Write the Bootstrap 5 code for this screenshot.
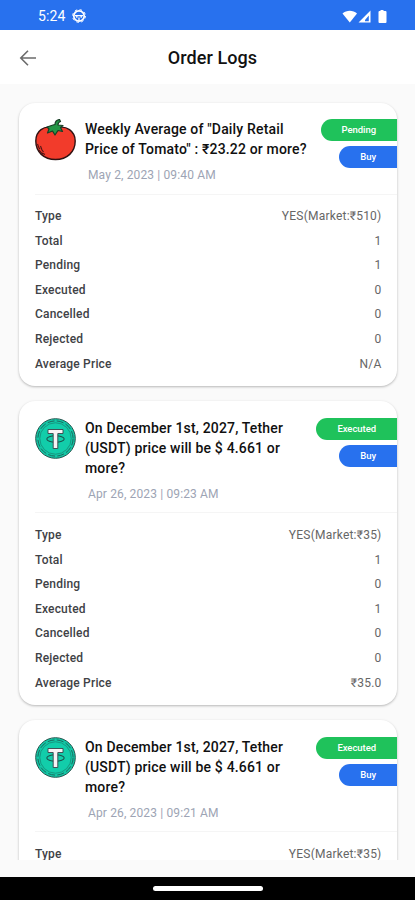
<!DOCTYPE html>
<html lang="en">
<head>
<meta charset="utf-8">
<meta name="viewport" content="width=device-width, initial-scale=1">
<title>Order Logs</title>
<link href="https://cdn.jsdelivr.net/npm/bootstrap@5.3.0/dist/css/bootstrap.min.css" rel="stylesheet">
<style>
body{font-family:Roboto,"Noto Sans",sans-serif;background:#fafafa;height:900px}
.statusbar{height:30px;background:#2871ee;padding:3px 27px 0 38px}
.clock{font-size:14px;letter-spacing:.1px}
.app-glyph{margin:-1px 0 0 7px}
.topbar{height:54px;padding:2px 19px 0}
.page-title{font-size:18px;font-weight:500;color:#111;letter-spacing:.08px;margin-right:8px;line-height:24px}
.feed{height:776px;padding:18.5px 18px 0 18.5px;gap:15px}
.order{border:0;border-radius:16px;box-shadow:0 1px 2.5px rgba(0,0,0,.27);padding:16.5px 0 10.5px 16.5px}
.order-title{font-size:14px;font-weight:500;line-height:20px;color:#101010;letter-spacing:.17px;margin:0}
.order-date{font-size:12px;line-height:16px;color:#9da4b4;margin:8px 0 0 3px;letter-spacing:.14px}
.order-icon{width:41px;height:43px}
.order-text{width:226px;margin-left:9px}
.pill{height:22px;border-radius:11px 0 0 11px;padding:0 21px;font-size:9.5px;font-weight:500;color:#fff;letter-spacing:-.05px}
.pill-status{background:#1fc25b}
.pill-side{background:#2871ee}
.pills{gap:5px}
.rule{height:1px;background:#f5f5f5;margin-top:10.5px}
.details{padding:9.3px 15.5px 0 0}
.detail{height:24.6px;font-size:12px}
.detail dt{font-weight:500;color:#404246;letter-spacing:.18px}
.detail dd{font-weight:400;color:#666;letter-spacing:.22px}
.tail{height:17px}
.navbar-area{height:23px;background:#000}
.handle{width:110px;height:5px;border-radius:3px;background:#fff}
</style>
</head>
<body class="d-flex flex-column overflow-hidden">
<svg class="d-none" xmlns="http://www.w3.org/2000/svg">
  <symbol id="tether" viewBox="0 0 41 43">
    <circle cx="20.5" cy="20.5" r="19.8" fill="#12c8a6" stroke="#24544e" stroke-width="1"/>
    <circle cx="20.5" cy="20.5" r="17.6" fill="none" stroke="#1b6a5f" stroke-width="1" stroke-dasharray="7 2.300"/>
    <circle cx="20.5" cy="20.5" r="15.700" fill="#12cdaa" stroke="#168b77" stroke-width=".8"/>
    <ellipse cx="20.5" cy="21" rx="8.700" ry="3.300" fill="none" stroke="#1b514b" stroke-width="1.100"/>
    <path d="M13 11.500h15v4h-5.200v15h-4.600v-15H13z" fill="#f7f3f5" stroke="#39434a" stroke-width=".9"/>
  </symbol>
</svg>

<header class="statusbar d-flex align-items-center text-white flex-shrink-0">
  <span class="clock">5:24</span>
  <svg class="app-glyph" width="14" height="14" viewBox="0 0 14 14" fill="none" stroke="#fff">
    <circle cx="7" cy="7" r="5.200" stroke-width="1.700"/>
    <circle cx="7" cy="7" r="6.400" stroke-width="1" stroke-dasharray="2.500 2.500"/>
    <path d="M3 6.600h8M4.800 8.800V6.600M9.200 8.800V6.600M7 8.600v3.500" stroke-width="1.300"/>
  </svg>
  <svg class="ms-auto" width="46" height="16" viewBox="0 0 46 16" fill="#fff">
    <path d="M.5 4.500C4.500.8 11 .8 15 4.500L7.800 13.500z"/>
    <path d="M28.500 1.500V13.500H16.500zM26.800 6.500L23 11v1.300h3.800z" fill-rule="evenodd"/>
    <path d="M37.500 2h2V1h3v1h2q1 0 1 1v10q0 1-1 1h-6q-1 0-1-1V3q0-1 1-1z" transform="translate(-1)"/>
  </svg>
</header>

<nav class="topbar bg-white d-flex align-items-center flex-shrink-0">
  <svg width="18" height="18" viewBox="0 0 18 18" fill="none" stroke="#6b6b6b" stroke-width="1.600"><path d="M17 9H2M9 1.800L1.800 9 9 16.200"/></svg>
  <h1 class="page-title flex-grow-1 text-center mb-0">Order Logs</h1>
</nav>

<main class="feed d-flex flex-column overflow-hidden flex-shrink-0">
  <article class="order card flex-shrink-0">
    <div class="d-flex">
      <svg class="order-icon flex-shrink-0" viewBox="0 0 41 43">
        <path d="M18 9C9 6 .8 12 .8 22c0 11 8 18.500 19.700 18.500S40.200 33 40.200 22C40.200 12 31 6 22 9z" fill="#f23b2b" stroke="#301212" stroke-width="1.400"/>
        <path d="M2.500 25l1.500 4 1 1M5.500 27l1.500 4 1.500 2M4 31l3.500 4M7 34l3 1.500" fill="none" stroke="#501515" stroke-width="1.100"/>
        <path d="M12 8l6-2 2-.5c0-3 1.500-4.500 4.500-5L25.500 2.500c-2 .6-2.500 1.500-2.500 3.500l5 .5-2.500 2 2 4-4.500-1-3 4.500-2.500-4-5 2 1.500-4z" fill="#249646" stroke="#173d25" stroke-width="1.200" stroke-linejoin="round"/>
      </svg>
      <div class="order-text flex-shrink-0">
        <h2 class="order-title">Weekly Average of "Daily Retail<br>Price of Tomato" : ₹23.22 or more?</h2>
        <p class="order-date">May 2, 2023 | 09:40 AM</p>
      </div>
      <div class="pills d-flex flex-column align-items-end ms-auto">
        <span class="pill pill-status d-flex align-items-center">Pending</span>
        <span class="pill pill-side d-flex align-items-center">Buy</span>
      </div>
    </div>
    <div class="rule"></div>
    <dl class="details mb-0">
      <div class="detail d-flex justify-content-between align-items-center"><dt>Type</dt><dd class="mb-0">YES(Market:₹510)</dd></div>
      <div class="detail d-flex justify-content-between align-items-center"><dt>Total</dt><dd class="mb-0">1</dd></div>
      <div class="detail d-flex justify-content-between align-items-center"><dt>Pending</dt><dd class="mb-0">1</dd></div>
      <div class="detail d-flex justify-content-between align-items-center"><dt>Executed</dt><dd class="mb-0">0</dd></div>
      <div class="detail d-flex justify-content-between align-items-center"><dt>Cancelled</dt><dd class="mb-0">0</dd></div>
      <div class="detail d-flex justify-content-between align-items-center"><dt>Rejected</dt><dd class="mb-0">0</dd></div>
      <div class="detail d-flex justify-content-between align-items-center"><dt>Average Price</dt><dd class="mb-0">N/A</dd></div>
    </dl>
  </article>

  <article class="order card flex-shrink-0">
    <div class="d-flex">
      <svg class="order-icon flex-shrink-0"><use href="#tether"/></svg>
      <div class="order-text flex-shrink-0">
        <h2 class="order-title">On December 1st, 2027, Tether<br>(USDT) price will be $ 4.661 or<br>more?</h2>
        <p class="order-date">Apr 26, 2023 | 09:23 AM</p>
      </div>
      <div class="pills d-flex flex-column align-items-end ms-auto">
        <span class="pill pill-status d-flex align-items-center">Executed</span>
        <span class="pill pill-side d-flex align-items-center">Buy</span>
      </div>
    </div>
    <div class="rule"></div>
    <dl class="details mb-0">
      <div class="detail d-flex justify-content-between align-items-center"><dt>Type</dt><dd class="mb-0">YES(Market:₹35)</dd></div>
      <div class="detail d-flex justify-content-between align-items-center"><dt>Total</dt><dd class="mb-0">1</dd></div>
      <div class="detail d-flex justify-content-between align-items-center"><dt>Pending</dt><dd class="mb-0">0</dd></div>
      <div class="detail d-flex justify-content-between align-items-center"><dt>Executed</dt><dd class="mb-0">1</dd></div>
      <div class="detail d-flex justify-content-between align-items-center"><dt>Cancelled</dt><dd class="mb-0">0</dd></div>
      <div class="detail d-flex justify-content-between align-items-center"><dt>Rejected</dt><dd class="mb-0">0</dd></div>
      <div class="detail d-flex justify-content-between align-items-center"><dt>Average Price</dt><dd class="mb-0">₹35.0</dd></div>
    </dl>
  </article>

  <article class="order card flex-shrink-0">
    <div class="d-flex">
      <svg class="order-icon flex-shrink-0"><use href="#tether"/></svg>
      <div class="order-text flex-shrink-0">
        <h2 class="order-title">On December 1st, 2027, Tether<br>(USDT) price will be $ 4.661 or<br>more?</h2>
        <p class="order-date">Apr 26, 2023 | 09:21 AM</p>
      </div>
      <div class="pills d-flex flex-column align-items-end ms-auto">
        <span class="pill pill-status d-flex align-items-center">Executed</span>
        <span class="pill pill-side d-flex align-items-center">Buy</span>
      </div>
    </div>
    <div class="rule"></div>
    <dl class="details mb-0">
      <div class="detail d-flex justify-content-between align-items-center"><dt>Type</dt><dd class="mb-0">YES(Market:₹35)</dd></div>
    </dl>
  </article>
</main>

<div class="tail flex-shrink-0"></div>
<footer class="navbar-area d-flex align-items-center justify-content-center flex-shrink-0"><div class="handle"></div></footer>
<script src="https://cdn.jsdelivr.net/npm/bootstrap@5.3.0/dist/js/bootstrap.bundle.min.js"></script>
</body>
</html>
